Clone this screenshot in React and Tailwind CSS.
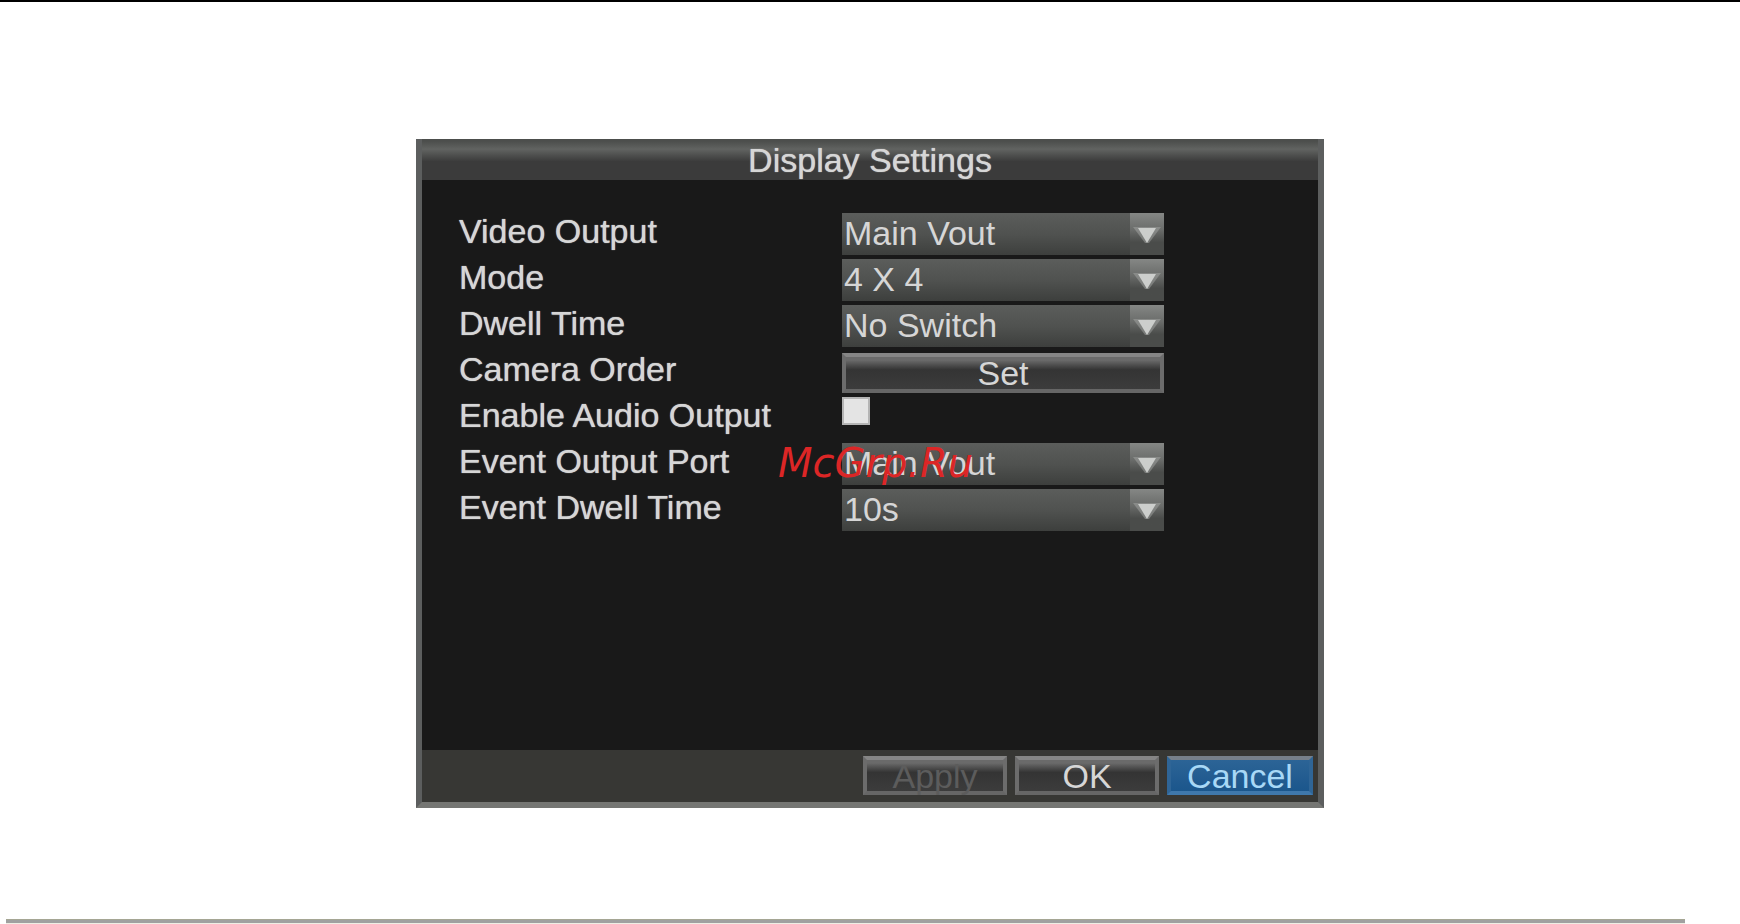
import { useState } from 'react';

const rows = [
    { id: 'videoOutput', label: 'Video Output', type: 'select', options: ['Main Vout', 'Spot Vout'] },
    { id: 'mode', label: 'Mode', type: 'select', options: ['4 X 4', '3 X 3', '2 X 2', '1 X 1'] },
    { id: 'dwellTime', label: 'Dwell Time', type: 'select', options: ['No Switch', '5s', '10s', '20s'] },
    { id: 'cameraOrder', label: 'Camera Order', type: 'button', text: 'Set' },
    { id: 'enableAudio', label: 'Enable Audio Output', type: 'checkbox' },
    { id: 'eventPort', label: 'Event Output Port', type: 'select', options: ['Main Vout', 'Spot Vout'] },
    { id: 'eventDwell', label: 'Event Dwell Time', type: 'select', options: ['10s', '20s', '30s'] },
];

const greyButton = "border-4 border-t-[#858585] border-x-[#6c6c6c] border-b-[#666666] bg-linear-to-b from-[#6a6a6a] from-10% via-[#343434] via-40% to-[#3c3c3c]";

function SelectBox({ id, options }) {
    const [value, setValue] = useState(options[0]);

    return (
        <div className="relative w-full">
            <select
                id={id}
                value={value}
                onChange={(e) => setValue(e.target.value)}
                className="block w-full h-[42px] pl-[2px] pr-10 pb-[2px] appearance-none text-[#d6d6d6]
                    bg-linear-to-b from-[#5b5d5b] via-[#505250] to-[#3d3f3d] focus:outline-none"
            >
                {options.map((o) => <option key={o}>{o}</option>)}
            </select>
            <span className="absolute right-0 top-0 w-[34px] h-[42px] pointer-events-none bg-linear-to-b from-[#858785] via-[#6a6c6a] via-40% to-[#4a4c4a] to-70%">
                <svg viewBox="0 0 34 42" className="w-full h-full">
                    <path d="M3 14H31L19 30H15Z" fill="#a4a6a4" opacity="0.5" />
                    <path d="M8 15H26L17 30Z" fill="#cccecc" />
                </svg>
            </span>
        </div>
    );
}

function Field({ row }) {
    const [checked, setChecked] = useState(false);

    if (row.type === 'select') return <SelectBox id={row.id} options={row.options} />;
    if (row.type === 'button') {
        return (
            <button id={row.id} type="button" className={`w-full h-10 self-end flex items-center justify-center ${greyButton}`}>
                {row.text}
            </button>
        );
    }
    return (
        <input
            id={row.id}
            type="checkbox"
            checked={checked}
            onChange={(e) => setChecked(e.target.checked)}
            className="appearance-none size-[28px] bg-[#e4e4e4] border-2 border-[#b4b4b4] checked:bg-[#2f6da8]"
        />
    );
}

function App() {
    return (
        <div className="flex flex-col min-h-screen bg-white">
            <div className="h-[2px] bg-black" />

            <main className="flex-1 flex items-start justify-center pt-[137px] pb-[111px]">
                <form
                    onSubmit={(e) => e.preventDefault()}
                    className="relative w-full max-w-[908px] border-x-6 border-b-6 border-x-[#5c5e5e] border-b-[#757673] bg-[#191919]
                        font-['Liberation_Sans',Arial,sans-serif] text-[34px] leading-[38px] text-[#d6d6d6] [text-shadow:0_0_1px_currentColor]"
                >
                    <h1 className="h-[41px] pt-[2px] text-center bg-linear-to-b from-[#4c4e4c] from-5% via-[#616361] via-25% to-[#3b3b3b] to-55%">
                        Display Settings
                    </h1>

                    <div className="flex flex-col gap-1 min-h-[570px] pt-[33px] pl-[37px] pr-[154px]">
                        {rows.map((row) => (
                            <div key={row.id} className="flex items-start h-[42px]">
                                <label htmlFor={row.id} className="w-[383px] shrink-0 leading-[36px]">{row.label}</label>
                                <Field row={row} />
                            </div>
                        ))}
                    </div>

                    <div className="flex justify-end gap-2 h-[52px] pt-[6px] pr-[5px] bg-[#373734]">
                        <button type="button" disabled className={`flex items-center justify-center w-[144px] h-[39px] text-[#5c5c5c] ${greyButton}`}>
                            Apply
                        </button>
                        <button type="submit" className={`flex items-center justify-center w-[144px] h-[39px] ${greyButton}`}>
                            OK
                        </button>
                        <button
                            type="button"
                            className="flex items-center justify-center w-[146px] h-[39px] text-[#a8d8f6] border-4 border-t-[#77808a]
                                border-x-[#2f6596] border-b-[#3f78ac] bg-linear-to-b from-[#2c6496] to-[#1b568c]"
                        >
                            Cancel
                        </button>
                    </div>

                    <span className="absolute left-[356px] top-[299px] pointer-events-none whitespace-nowrap text-[#dc2626] italic
                        font-['DejaVu_Sans',sans-serif] text-[40px] leading-[50px] text-shadow-none">
                        McGrp.Ru
                    </span>
                </form>
            </main>

            <hr className="h-[5px] ml-[6px] mr-[55px] border-t border-b border-t-[#a5a694] border-b-[#eeeee4] bg-[#a0a0a0]" />
        </div>
    );
}

export default App;
